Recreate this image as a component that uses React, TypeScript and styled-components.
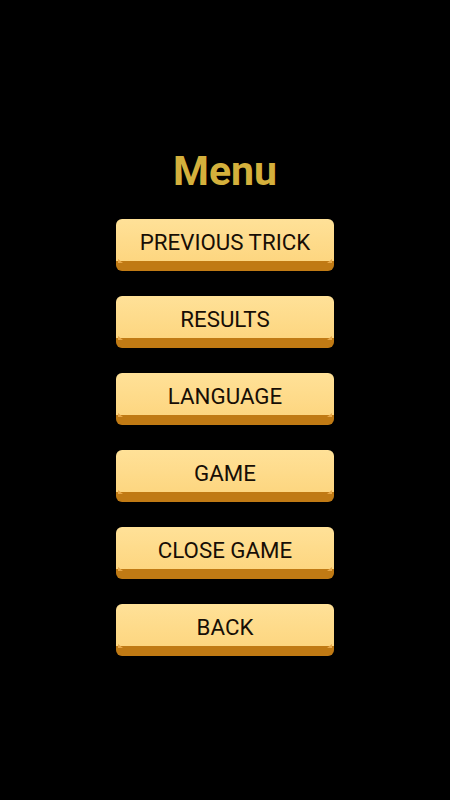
import React from 'react';
import styled, { createGlobalStyle } from 'styled-components';

const GlobalStyle = createGlobalStyle`
  html, body {
    margin: 0;
    padding: 0;
    background: #000000;
  }
  body {
    font-family: Roboto, 'Liberation Sans', Arial, sans-serif;
  }
`;

const Screen = styled.div`
  width: 450px;
  height: 800px;
  background: #000000;
  display: flex;
  flex-direction: column;
  align-items: center;
  padding-top: 147px;
  box-sizing: border-box;
`;

const Title = styled.h1`
  margin: 0 0 24px 0;
  font-family: Roboto, 'Liberation Sans', Arial, sans-serif;
  font-size: 41px;
  line-height: 48px;
  font-weight: 700;
  color: #d4b03c;
`;

const ButtonList = styled.div`
  display: flex;
  flex-direction: column;
  gap: 25px;
`;

const MenuButton = styled.button`
  position: relative;
  width: 218px;
  height: 52px;
  padding: 3px 0 0 0;
  border: none;
  border-bottom: 10px solid #c07a14;
  border-radius: 6px;
  background: linear-gradient(180deg, #ffe198 0%, #fdd680 100%);
  color: #170e05;
  font-family: Roboto, 'Liberation Sans', Arial, sans-serif;
  font-size: 22.3px;
  font-weight: 400;
  cursor: pointer;

  &::before,
  &::after {
    content: '';
    position: absolute;
    bottom: -2px;
    width: 0;
    height: 0;
    border-top: 4px solid transparent;
  }

  &::before {
    left: 2px;
    border-left: 5px solid #e9a94a;
  }

  &::after {
    right: 2px;
    border-right: 5px solid #e9a94a;
  }
`;

const items = ['PREVIOUS TRICK', 'RESULTS', 'LANGUAGE', 'GAME', 'CLOSE GAME', 'BACK'];

export default function App() {
  return (
    <>
      <GlobalStyle />
      <Screen>
        <Title>Menu</Title>
        <ButtonList>
          {items.map((label) => (
            <MenuButton key={label}>{label}</MenuButton>
          ))}
        </ButtonList>
      </Screen>
    </>
  );
}
